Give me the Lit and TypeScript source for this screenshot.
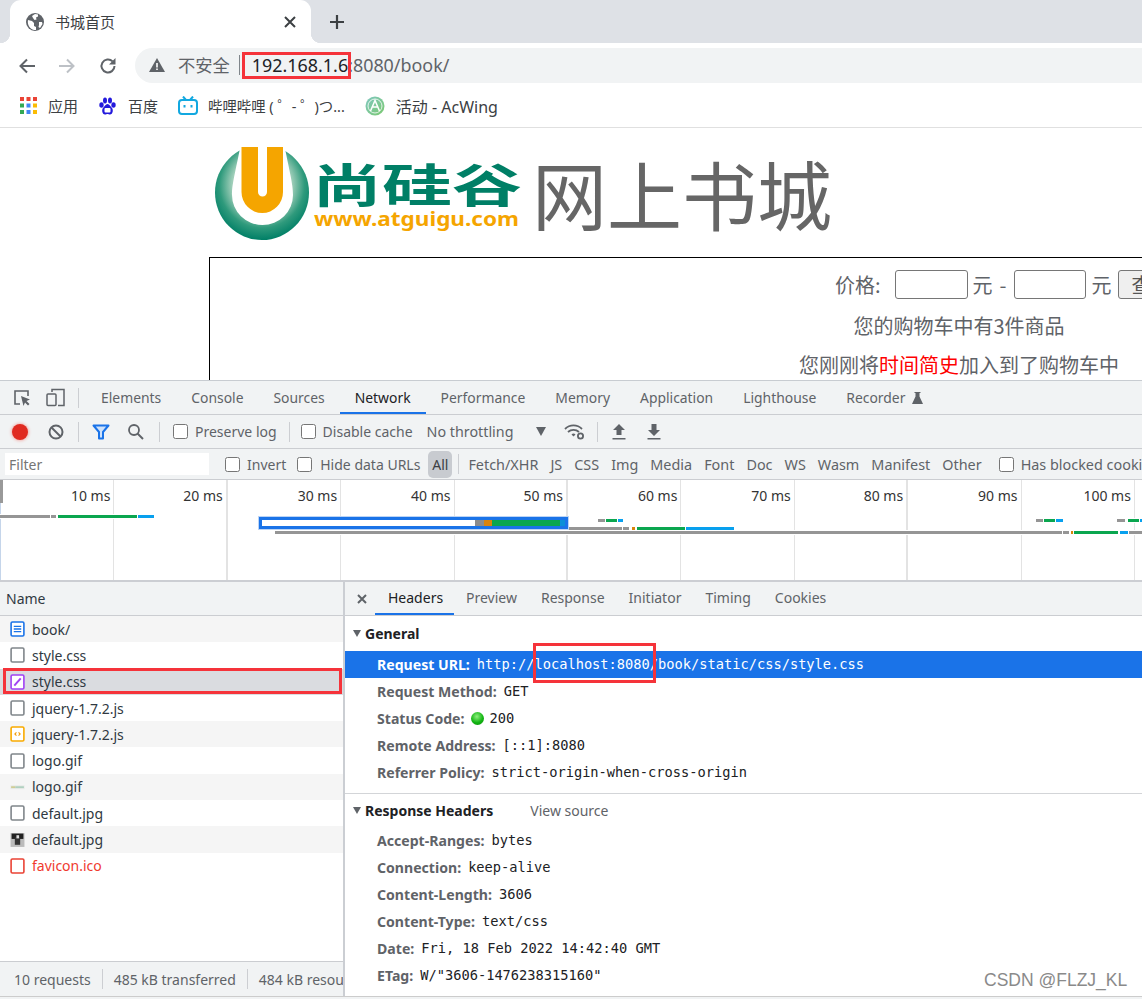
import { LitElement, html, css, svg } from "lit";
import { customElement } from "lit/decorators.js";

const file = (cls: string, inner: unknown = "") => html`<svg class="ficon" viewBox="0 0 14 15">
  <rect class=${cls} x="1" y="1" width="12" height="13" rx="1.2"></rect>${inner}</svg>`;

const icons: Record<string, unknown> = {
  plain: file("f-plain"),
  doc: file("f-doc", svg`<path d="M3.5 5h7M3.5 7.5h7M3.5 10h7" stroke="#1a73e8" stroke-width="1.2"/>`),
  css: file("f-css", svg`<path d="M4 11l6-7" stroke="#a142f4" stroke-width="1.8"/>`),
  js: file("f-js", svg`<path d="M6 6L4.5 7.5 6 9M8 6l1.5 1.5L8 9" fill="none" stroke="#f29900" stroke-width="1"/>`),
  red: file("f-red"),
  gif: html`<svg class="ficon" viewBox="0 0 14 15"><rect x="0.5" y="6" width="13" height="3.5" fill="#e4e8e4"/><rect x="1" y="7" width="4" height="1.2" fill="#c9c47a"/><rect x="5" y="7" width="8" height="1.2" fill="#9fc9b4"/></svg>`,
  jpg: html`<svg class="ficon" viewBox="0 0 14 15"><rect x="0.5" y="1" width="13" height="13" fill="#bbb"/><rect x="1.5" y="1.5" width="11" height="5" fill="#222"/><rect x="4.5" y="5" width="5" height="7" fill="#333"/><rect x="6" y="3" width="2.5" height="3" fill="#ddd"/></svg>`,
};

const rows: [string, string, boolean?][] = [
  ["book/", "doc"], ["style.css", "plain"], ["style.css", "css"], ["jquery-1.7.2.js", "plain"], ["jquery-1.7.2.js", "js"],
  ["logo.gif", "plain"], ["logo.gif", "gif"], ["default.jpg", "plain"], ["default.jpg", "jpg"], ["favicon.ico", "red", true],
];

const G = "#959595", GR = "#0aa64f", B = "#08a0ee", O = "#d9840d";
const bars: [number, number, number, number, string][] = [
  [0, 515, 50, 3, G], [51, 515, 5, 3, G], [58, 515, 79, 3, GR], [138, 515, 16, 3, B],
  [568, 527, 54, 3, G], [623, 527, 6, 3, G], [632, 527, 3, 3, O], [637, 527, 48, 3, GR], [686, 527, 48, 3, B],
  [598, 519, 7, 3, G], [606, 519, 11, 3, GR], [618, 519, 5, 3, B],
  [1036, 519, 7, 3, G], [1044, 519, 11, 3, GR], [1056, 519, 7, 3, B],
  [1117, 519, 8, 3, G], [1128, 519, 12, 3, GR], [1140, 519, 2, 3, B],
  [275, 531, 788, 3, G], [1063, 531, 6, 3, G], [1071, 531, 3, 3, O], [1074, 531, 44, 3, GR], [1120, 531, 8, 3, B], [1129, 531, 13, 3, G],
];
const labels = ["10 ms", "20 ms", "30 ms", "40 ms", "50 ms", "60 ms", "70 ms", "80 ms", "90 ms", "100 ms", ""];
const thick = [1, 4, 7];

const general: [string, string][] = [
  ["Request Method:", "GET"], ["Status Code:", "200"], ["Remote Address:", "[::1]:8080"], ["Referrer Policy:", "strict-origin-when-cross-origin"],
];
const response: [string, string][] = [
  ["Accept-Ranges:", "bytes"], ["Connection:", "keep-alive"], ["Content-Length:", "3606"], ["Content-Type:", "text/css"],
  ["Date:", "Fri, 18 Feb 2022 14:42:40 GMT"], ["ETag:", 'W/"3606-1476238315160"'],
];
const chips = ["Fetch/XHR", "JS", "CSS", "Img", "Media", "Font", "Doc", "WS", "Wasm", "Manifest", "Other"];
const tabs = ["Elements", "Console", "Sources", "Network", "Performance", "Memory", "Application", "Lighthouse"];
const subtabs = ["Headers", "Preview", "Response", "Initiator", "Timing", "Cookies"];

@customElement("app-root")
export class AppRoot extends LitElement {
  static styles = css`
    :host { display: block; position: relative; width: 1142px; height: 999px; overflow: hidden; background: #fff;
      font-family: "Noto Sans", "Noto Sans CJK SC", sans-serif; color: #5f6368; }
    svg { display: block; flex: none; }
    .strip { height: 43px; background: #dee1e6; display: flex; align-items: center; }
    .tab { position: relative; margin-left: 10px; width: 301px; height: 43px; box-sizing: border-box; background: #fff; border-radius: 11px 11px 0 0;
      display: flex; align-items: center; padding-left: 16px; }
    .tab::before, .tab::after { content: ""; position: absolute; bottom: 0; width: 10px; height: 10px; }
    .tab::before { left: -10px; background: radial-gradient(circle at 0 0, #dee1e6 10px, #fff 10.5px); }
    .tab::after { right: -10px; background: radial-gradient(circle at 100% 0, #dee1e6 10px, #fff 10.5px); }
    .tab-title { margin-left: 11px; font-size: 15px; color: #3c4043; width: 228px; }
    .newtab { margin-left: 17px; }
    .toolbar { height: 40px; box-sizing: border-box; padding-top: 5px; display: flex; align-items: center; }
    .nav { width: 40px; display: flex; justify-content: center; }
    .nav.first { margin-left: 7px; }
    .nav.reload { padding-left: 2px; box-sizing: border-box; }
    .omni { margin-left: 8px; flex: 1; height: 35px; background: #f1f3f4; border-radius: 18px 0 0 18px; display: flex; align-items: center;
      padding-left: 14px; font-size: 17.9px; color: #5f6368; white-space: nowrap; line-height: 33px; padding-bottom: 1px; box-sizing: border-box; }
    .insecure { margin-left: 13px; font-size: 17.3px; }
    .bar { width: 1px; height: 20px; background: #80868b; margin: 0 12px 0 9px; }
    .host { color: #202124; }
    .bookmarks { border-bottom: 1px solid #e0e0e0; height: 43px; padding-top: 1px; display: flex; align-items: center;
      font-size: 15px; color: #3c4043; white-space: nowrap; padding-left: 20px; }
    .bm { display: flex; align-items: center; gap: 11px; margin-right: 21px; }
    .bm.b2 { gap: 12px; margin-right: 20px; }
    .bm.b3 { gap: 10px; margin-right: 20px; font-size: 14.4px; }
    .bm.b4 { gap: 11px; font-size: 16px; }
    .page { height: 252px; overflow: hidden; font-family: "Noto Sans CJK SC", "Noto Sans", sans-serif; color: #5f6368; }
    .brand { display: flex; align-items: flex-start; padding: 17px 0 0 215px; height: 95px; }
    .brand-title { margin-left: 7px; font-size: 75px; line-height: 95px; color: #666; white-space: nowrap; font-weight: 400; }
    .box { width: 1500px; margin: 17px 0 0 209px; border: 1px solid #000; font-size: 20px; height: 300px; box-sizing: border-box; }
    .price { display: flex; align-items: center; height: 29px; padding: 12px 0 0 625px; white-space: nowrap; line-height: 27px; }
    .price input { width: 73px; height: 29px; box-sizing: border-box; border: 1px solid #767676; border-radius: 3px; background: #fff; padding: 0; margin: 0; }
    .price .i1 { margin: 0 5px 0 14px; }
    .price .i2 { margin: 0 6px 0 7px; width: 72px; }
    .dash { margin-left: 7px; }
    .qbtn { margin-left: 6px; width: 68px; height: 29px; box-sizing: border-box; border: 1px solid #767676; border-radius: 3px; background: #efefef; color: #555; font: inherit; padding: 0; }
    .line { text-align: center; line-height: 29px; }
    .l1 { margin-top: 12px; }
    .l2 { margin-top: 10px; }
    .hot { color: #f00; }

    .dev { border-top: 1px solid #c8ccd1; font-size: 14px; background: #f1f3f4; height: 618px; display: flex; flex-direction: column; }
    .drow { display: flex; align-items: center; box-sizing: border-box; border-bottom: 1px solid #cbcdd1; white-space: nowrap; flex: none; background: #f1f3f4; overflow: hidden; }
    .drow > * { flex: none; }
    .r1 { height: 34px; padding-left: 13px; }
    .r2 { height: 34px; padding-left: 12px; }
    .r3 { height: 31px; padding-left: 5px; }
    .sep { width: 1px; height: 20px; background: #ccced2; flex: none; }
    .r1 .dev-ic2 { margin-left: 15px; }
    .r1 .sep { margin: 0 7px 0 13px; }
    .t { padding: 0 15px; height: 33px; line-height: 33px; box-sizing: border-box; font-size: 13.9px; }
    .t.on { color: #202124; border-bottom: 2px solid #1a73e8; line-height: 33px; }
    .recorder { display: flex; align-items: center; gap: 7px; }
    .rec { width: 16px; height: 16px; border-radius: 50%; background: #e02a20; box-shadow: 0 0 3px 1px #f2b3ae; }
    .r2 .ic-clear { margin-left: 20px; }
    .r2 .s1 { margin: 0 13px 0 14px; }
    .r2 .ic-search { margin-left: 17px; }
    .r2 .s2 { margin: 0 13px 0 15px; }
    .r2 .s3 { margin: 0 11px 0 12px; }
    .r2 .s4 { margin: 0 14px 0 12px; }
    .cb { width: 13px; height: 13px; border: 1px solid #767676; border-radius: 2.5px; background: #fff; flex: none; margin-right: 7px; }
    .r2 .throttle { margin-left: 14px; font-size: 14.3px; }
    .r2 .caret { margin-left: 23px; }
    .r2 .ic-wifi { margin-left: 18px; }
    .r2 .ic-down { margin-left: 21px; }
    .filter { width: 204px; height: 22px; background: #fff; line-height: 22px; padding-left: 4px; box-sizing: border-box; color: #757575; margin-right: 16px; padding-top: 1px; }
    .r3 .hide { margin-left: 11px; margin-right: 8px; }
    .all { margin-left: 8px; width: 24px; height: 27px; line-height: 27px; text-align: center; background: #c8cbd0; border-radius: 5px; color: #3c4043; }
    .r3 .sep { margin: 0 3px 0 6px; }
    .chip { padding: 0 6px; font-size: 14.4px; }
    .r3 .block { margin-left: 11px; }
    .blocked { font-size: 14.4px; }
    .overview { position: relative; height: 100px; flex: none; background: #fff; border-bottom: 2px solid #ccced3; display: grid; padding-left: 1px;
      grid-template-columns: repeat(11, 113.4px); overflow: hidden; color: #333; }
    .gcol { box-sizing: border-box; height: 100px; border-right: 1px solid #e3e3e3; text-align: right; padding: 6px 3px 0 0; line-height: 20px; white-space: nowrap; }
    .gcol.thick { border-right: 2px solid #e3e3e3; }
    .pin { position: absolute; left: 0; top: 0; width: 3px; height: 23px; background: #999; }
    .pin2 { position: absolute; left: 0; top: 23px; width: 1px; height: 77px; background: #c5d5ea; }
    .tbar { position: absolute; box-shadow: 0 0 0 1px #fff; }
    .sel { position: absolute; left: 259px; top: 37px; width: 309px; height: 12px; box-sizing: border-box; border: 3px solid #1a73e8; background: #fff; display: flex; box-shadow: 0 0 0 1px #bcd4f5; }
    .sel i { display: block; height: 100%; }
    .sel .w { width: 213px; }
    .sel .g { width: 9px; background: #8c8c8c; }
    .sel .o { width: 8px; background: #d9840d; }
    .sel .n { width: 68px; background: #0aa64f; }
    .sel .b { width: 5px; background: #0a8fd8; }

    .split { flex: 1; display: flex; min-height: 0; background: #fff; border-bottom: 1px solid #ccc; margin-bottom: 2px; }
    .left { width: 343px; border-right: 2px solid #cbced3; display: flex; flex-direction: column; flex: none; }
    .name { height: 33px; border-bottom: 1px solid #cbcdd1; background: #f1f3f4; line-height: 33px; padding-left: 6px; color: #303942; flex: none; }
    .list { flex: 1; }
    .req { height: 26.3px; display: flex; align-items: center; padding-left: 10px; color: #303942; }
    .req:nth-child(odd) { background: #f5f5f5; }
    .req.sel-row { background: #dadce0; }
    .req.err { color: #f03a2e; background: #fff; }
    .ficon { width: 15px; height: 16px; margin-right: 7px; }
    .ficon rect[class] { fill: #fff; stroke-width: 1.5; }
    .f-plain { stroke: #80868b; }
    .f-doc { stroke: #1a73e8; }
    .f-css { stroke: #a142f4; }
    .f-js { stroke: #f9ab00; }
    .f-red { stroke: #ea4335; }
    .foot { height: 34px; flex: none; border-top: 1px solid #cbcdd1; background: #f1f3f4; display: flex; align-items: center; padding-left: 14px; white-space: nowrap; overflow: hidden; }
    .foot > * { flex: none; }
    .foot .sep { margin: 0 11px; }
    .right { flex: 1; min-width: 0; display: flex; flex-direction: column; white-space: nowrap; overflow: hidden; }
    .subtabs { height: 33px; display: flex; align-items: center; background: #f1f3f4; border-bottom: 1px solid #cbcdd1; flex: none; }
    .close { margin: 0 7px 0 11px; }
    .st { padding: 0 12px; height: 33px; line-height: 32px; box-sizing: border-box; }
    .st.on { color: #202124; width: 79px; padding-left: 13px; border-bottom: 2px solid #1a73e8; }
    .sec { height: 35px; display: flex; align-items: center; font-weight: 700; color: #202124; padding-left: 8px; flex: none; }
    .tri { width: 0; height: 0; border-left: 4.5px solid transparent; border-right: 4.5px solid transparent; border-top: 7px solid #5f6368; margin-right: 4px; }
    .kv { display: flex; align-items: center; height: 27.1px; padding-left: 32px; flex: none; box-sizing: border-box; }
    .kv.gen { padding-bottom: 1px; }
    .k { font-weight: 700; color: #5f6368; margin-right: 7px; font-size: 14.1px; }
    .v { font-family: "DejaVu Sans Mono", monospace; font-size: 13.7px; color: #202124; }
    .kv.url { background: #1a73e8; height: 26.5px; margin-bottom: 0.6px; }
    .kv.url .k, .kv.url .v { color: #fff; }
    .dot { width: 13px; height: 13px; border-radius: 50%; margin-right: 5px; background: radial-gradient(circle at 45% 35%, #8ff07f, #13b513 55%, #0a8a0a); }
    .hr { height: 1px; background: #d3d5d8; margin-top: 7px; flex: none; }
    .sec.rh { height: 32px; }
    .vs { font-weight: 400; color: #5f6368; margin-left: 37px; }

    .red { position: absolute; box-sizing: border-box; border: 3px solid #f5333a; }
    .a1 { left: 242px; top: 52px; width: 109px; height: 27px; }
    .a2 { left: 3px; top: 668px; width: 339px; height: 26px; }
    .a3 { left: 533px; top: 643px; width: 123px; height: 40px; }
    .mark { position: absolute; left: 984px; top: 969px; font-family: "Liberation Sans", sans-serif; font-size: 17.5px; color: #8a8a8a; line-height: 22px; white-space: nowrap; }
  `;

  render() {
    return html`
      <div class="strip">
        <div class="tab">
          <svg width="18" height="18" viewBox="0 0 18 18"><circle cx="9" cy="9" r="9" fill="#5f6368"/><path d="M2 7l4 1 2 2 0 3 2 1 0 3-2 0C4 16 1 12 2 7zM9 1l3 .5 0 2-2 1 .5 2-2 .5-1.5-2L6 3zM13 9l3 0 .5 2-2.5 4-1.5-1 .5-2z" fill="#fff"/></svg>
          <span class="tab-title">书城首页</span>
          <svg width="14" height="14" viewBox="0 0 14 14"><path d="M2 2l10 10M12 2L2 12" stroke="#3c4043" stroke-width="2"/></svg>
        </div>
        <svg class="newtab" width="18" height="18" viewBox="0 0 18 18"><path d="M9 2v14M2 9h14" stroke="#3c4043" stroke-width="2.2"/></svg>
      </div>
      <div class="toolbar">
        <div class="nav first"><svg width="18" height="18" viewBox="0 0 18 18"><path d="M17 9H3M9 2.5L2.5 9 9 15.5" fill="none" stroke="#5f6368" stroke-width="2"/></svg></div>
        <div class="nav"><svg width="18" height="18" viewBox="0 0 18 18"><path d="M1 9h14M9 2.5L15.500 9 9 15.5" fill="none" stroke="#bdc1c6" stroke-width="2"/></svg></div>
        <div class="nav reload"><svg width="18" height="18" viewBox="0 0 18 18"><path d="M15.5 9a6.5 6.5 0 1 1-1.900-4.600" fill="none" stroke="#5f6368" stroke-width="2"/><path d="M16.500 1v6.500H10z" fill="#5f6368"/></svg></div>
        <div class="omni">
          <svg width="16" height="14" viewBox="0 0 16 14"><path d="M8 0l8 14H0z" fill="#5f6368"/><path d="M7.200 5h1.600v4.500H7.200zM7.200 10.500h1.600V12H7.200z" fill="#fff"/></svg>
          <span class="insecure">不安全</span><span class="bar"></span><span class="host">192.168.1.6</span><span>:8080/book/</span>
        </div>
      </div>
      <div class="bookmarks">
        <div class="bm">
          <svg width="17" height="17" viewBox="0 0 17 17">
            ${[[0,0,"#ea4335"],[6.5,0,"#ea4335"],[13,0,"#ea4335"],[0,6.5,"#34a853"],[6.5,6.5,"#4285f4"],[13,6.5,"#fbbc04"],[0,13,"#34a853"],[6.5,13,"#4285f4"],[13,13,"#fbbc04"]].map(([x,y,c]) => svg`<rect x=${x} y=${y} width="4" height="4" fill=${c}/>`)}
          </svg>
          <span>应用</span>
        </div>
        <div class="bm b2">
          <svg width="17" height="18" viewBox="0 0 17 18" fill="#2319dc"><ellipse cx="2.500" cy="8" rx="2.200" ry="2.800"/><ellipse cx="6" cy="3.500" rx="2" ry="3"/><ellipse cx="11" cy="3.500" rx="2" ry="3"/><ellipse cx="14.500" cy="8" rx="2.200" ry="2.800"/><path d="M8.500 7c-2 0-3 2.500-4.500 4S3 17.500 6 17.500c1.200 0 1.700-.5 2.500-.5s1.300.5 2.500.5c3 0 3.500-5 2-6.500S10.500 7 8.500 7z"/><rect x="5.500" y="11" width="6" height="4.500" fill="#fff" rx="1"/></svg>
          <span>百度</span>
        </div>
        <div class="bm b3">
          <svg width="20" height="19" viewBox="0 0 20 19"><path d="M5 0.500L8 4M15 0.500L12 4" stroke="#12a8e0" stroke-width="2"/><rect x="1" y="4" width="18" height="14" rx="3" fill="none" stroke="#12a8e0" stroke-width="2"/><path d="M6.500 9v2.500M13.500 9v2.500" stroke="#12a8e0" stroke-width="2"/></svg>
          <span>哔哩哔哩 ( ゜- ゜)つ...</span>
        </div>
        <div class="bm b4">
          <svg width="20" height="20" viewBox="0 0 20 20"><defs><linearGradient id="acw" x1="0" y1="0" x2="1" y2="1"><stop offset="0" stop-color="#7fc7c0"/><stop offset="1" stop-color="#7bc96f"/></linearGradient></defs><circle cx="10" cy="10" r="9.500" fill="url(#acw)"/><circle cx="10" cy="10" r="7" fill="none" stroke="#fff" stroke-width=".8"/><path d="M5.500 15L10 4.500 14.500 15M7 11h6" fill="none" stroke="#fff" stroke-width="1.500"/></svg>
          <span>活动 - AcWing</span>
        </div>
      </div>

      <div class="page">
        <div class="brand">
          <svg width="310" height="95" viewBox="0 0 310 95">
            <defs><radialGradient id="lg" cx="50%" cy="42%" r="58%"><stop offset="0.55" stop-color="#9fceb9"/><stop offset="0.78" stop-color="#2f9a7c"/><stop offset="1" stop-color="#007f66"/></radialGradient></defs>
            <ellipse cx="47" cy="47.500" rx="47" ry="47.500" fill="url(#lg)"/>
            <path d="M26 -2C21 25 17 38 17 50a30.500 30 0 0 0 61 0C78 38 74 25 69 -2z" fill="#fff"/>
            <path d="M26.500 2H43V47a4.500 4.500 0 0 0 9 0V2H68V47a20.750 21 0 0 1-41.500 0z" fill="#f5a500"/>
            <text x="97" y="57" font-family="Noto Sans CJK SC" font-weight="700" font-size="46" fill="#007f66" textLength="210" lengthAdjust="spacingAndGlyphs">尚硅谷</text>
            <text x="99" y="81" font-family="Noto Sans" font-weight="700" font-size="20" fill="#f5a500" textLength="205" lengthAdjust="spacingAndGlyphs">www.atguigu.com</text>
          </svg>
          <div class="brand-title">网上书城</div>
        </div>
        <div class="box">
          <div class="price">
            <span>价格:</span><input class="i1" /><span>元</span><span class="dash">-</span><input class="i2" /><span>元</span><button class="qbtn">查询</button>
          </div>
          <div class="line l1">您的购物车中有3件商品</div>
          <div class="line l2">您刚刚将<span class="hot">时间简史</span>加入到了购物车中</div>
        </div>
      </div>

      <div class="dev">
        <div class="drow r1">
          <svg width="18" height="18" viewBox="0 0 18 18"><path d="M7 15H2V2h13v5" fill="none" stroke="#5f6368" stroke-width="1.600"/><path d="M8 7l9 3.500-3.500 1.500 3 3-1.500 1.500-3-3L10.500 17z" fill="#5f6368"/></svg>
          <svg class="dev-ic2" width="19" height="19" viewBox="0 0 19 19"><path d="M6 4V1.500h12v16H12" fill="none" stroke="#5f6368" stroke-width="1.500"/><rect x="1" y="6" width="9" height="11.500" rx="1" fill="none" stroke="#5f6368" stroke-width="1.500"/></svg>
          <span class="sep"></span>
          ${tabs.map((t) => html`<div class="t ${t === "Network" ? "on" : ""}">${t}</div>`)}
          <div class="t recorder">Recorder <svg width="11" height="12" viewBox="0 0 11 12"><path d="M2.500 0h6v1H7.500v3.500L11 12H0l3.500-7.500V1H2.500z" fill="#5f6368"/></svg></div>
        </div>
        <div class="drow r2">
          <div class="rec"></div>
          <svg class="ic-clear" width="16" height="16" viewBox="0 0 16 16"><circle cx="8" cy="8" r="6.500" fill="none" stroke="#5f6368" stroke-width="2"/><path d="M3.500 3.500l9 9" stroke="#5f6368" stroke-width="2"/></svg>
          <span class="sep s1"></span>
          <svg width="18" height="16" viewBox="0 0 18 16"><path d="M1.500 1.500h15l-5.500 6.500v6.500H7V8z" fill="#cfe2fb" stroke="#1a73e8" stroke-width="2" stroke-linejoin="round"/></svg>
          <svg class="ic-search" width="17" height="17" viewBox="0 0 17 17"><circle cx="7" cy="7" r="5" fill="none" stroke="#5f6368" stroke-width="1.800"/><path d="M10.500 10.500l5.500 5.500" stroke="#5f6368" stroke-width="2"/></svg>
          <span class="sep s2"></span>
          <span class="cb"></span><span>Preserve log</span>
          <span class="sep s3"></span>
          <span class="cb"></span><span>Disable cache</span>
          <span class="throttle">No throttling</span>
          <svg class="caret" width="10" height="9" viewBox="0 0 10 9"><path d="M0 0h10L5 9z" fill="#5f6368"/></svg>
          <svg class="ic-wifi" width="21" height="17" viewBox="0 0 21 17"><path d="M1 6a12 12 0 0 1 17 0M4 9a8 8 0 0 1 11 0" fill="none" stroke="#5f6368" stroke-width="1.800"/><path d="M7.500 11.500l2 2 2-2a3 3 0 0 0-4 0z" fill="#5f6368"/><circle cx="16.500" cy="13" r="2.600" fill="none" stroke="#5f6368" stroke-width="1.800"/></svg>
          <span class="sep s4"></span>
          <svg width="14" height="17" viewBox="0 0 14 17"><path d="M7 1l6 6H9.500v5h-5V7H1zM0.500 15h13v1.500H.5z" fill="#5f6368"/></svg>
          <svg class="ic-down" width="14" height="17" viewBox="0 0 14 17"><path d="M7 13L1 7h3.500V1h5v6H13zM.5 15h13v1.500H.5z" fill="#5f6368"/></svg>
        </div>
        <div class="drow r3">
          <div class="filter">Filter</div>
          <span class="cb"></span><span>Invert</span>
          <span class="cb hide"></span><span>Hide data URLs</span>
          <div class="all">All</div>
          <span class="sep"></span>
          ${chips.map((c) => html`<span class="chip">${c}</span>`)}
          <span class="cb block"></span><span class="blocked">Has blocked cookies</span>
        </div>
        <div class="overview">
          ${labels.map((l, i) => html`<div class="gcol ${thick.includes(i) ? "thick" : ""}">${l}</div>`)}
          <div class="pin"></div><div class="pin2"></div>
          ${bars.map(([x, y, w, h, c]) => html`<div class="tbar" style="left:${x}px;top:${y - 480}px;width:${w}px;height:${h}px;background:${c}"></div>`)}
          <div class="sel"><i class="w"></i><i class="g"></i><i class="o"></i><i class="n"></i><i class="b"></i></div>
        </div>
        <div class="split">
          <div class="left">
            <div class="name">Name</div>
            <div class="list">
              ${rows.map(([n, ic, err], i) => html`<div class="req ${err ? "err" : ""} ${i === 2 ? "sel-row" : ""}">${icons[ic]}<span>${n}</span></div>`)}
            </div>
            <div class="foot"><span>10 requests</span><span class="sep"></span><span>485 kB transferred</span><span class="sep"></span><span>484 kB resources</span></div>
          </div>
          <div class="right">
            <div class="subtabs">
              <svg class="close" width="12" height="12" viewBox="0 0 12 12"><path d="M2 2l8 8M10 2l-8 8" stroke="#5f6368" stroke-width="2"/></svg>
              ${subtabs.map((t, i) => html`<div class="st ${i === 0 ? "on" : ""}">${t}</div>`)}
            </div>
            <div class="sec"><span class="tri"></span>General</div>
            <div class="kv url"><span class="k">Request URL:</span><span class="v">http://localhost:8080/book/static/css/style.css</span></div>
            ${general.map(([k, v]) => html`<div class="kv gen"><span class="k">${k}</span>${k === "Status Code:" ? html`<span class="dot"></span>` : ""}<span class="v">${v}</span></div>`)}
            <div class="hr"></div>
            <div class="sec rh"><span class="tri"></span>Response Headers<span class="vs">View source</span></div>
            ${response.map(([k, v]) => html`<div class="kv"><span class="k">${k}</span><span class="v">${v}</span></div>`)}
          </div>
        </div>
      </div>
      <div class="red a1"></div>
      <div class="red a2"></div>
      <div class="red a3"></div>
      <div class="mark">CSDN @FLZJ_KL</div>
    `;
  }
}
